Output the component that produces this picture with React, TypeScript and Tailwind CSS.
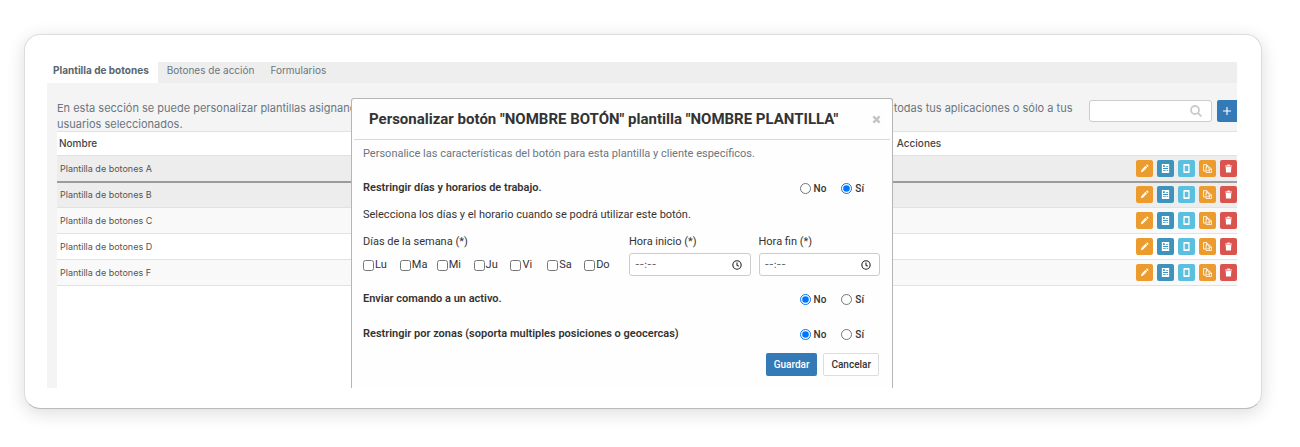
import type { ReactNode } from 'react';

const TABS = ['Plantilla de botones', 'Botones de acción', 'Formularios'];

const ROWS = [
  { name: 'Plantilla de botones A', className: 'bg-[#ededed] border-b-2 border-[#9b9c9c]' },
  { name: 'Plantilla de botones B', className: 'bg-[#ededed] border-b border-[#e2e2e2]' },
  { name: 'Plantilla de botones C', className: 'bg-[#f9f9f9] border-b border-[#e2e2e2]' },
  { name: 'Plantilla de botones D', className: 'bg-white border-b border-[#e2e2e2]' },
  { name: 'Plantilla de botones F', className: 'bg-[#f9f9f9] border-b border-[#e2e2e2]' },
];

const DAYS = ['Lu', 'Ma', 'Mi', 'Ju', 'Vi', 'Sa', 'Do'];

function Glyph({ children }: { children: ReactNode }) {
  return (
    <svg viewBox="0 0 16 16" className="size-[9px]" fill="currentColor" aria-hidden="true">
      {children}
    </svg>
  );
}

const ACTIONS = [
  {
    label: 'Editar',
    className: 'bg-[#ec9c2e]',
    icon: (
      <Glyph>
        <path d="M1.5 14.5l1-4 7.2-7.2 3 3-7.2 7.2zM10.7 2.3l1-1c.5-.5 1.2-.5 1.7 0l1.3 1.3c.5.5.5 1.2 0 1.7l-1 1z" />
      </Glyph>
    ),
  },
  {
    label: 'Formulario',
    className: 'bg-[#3d93bb]',
    icon: (
      <Glyph>
        <path
          fillRule="evenodd"
          d="M1.5 0h13v16h-13zM3.5 2.2v3.2h3.2V2.2zM8.6 3.6v1.5h4V3.6zM3.5 7.2v1.5h9V7.2zM3.5 11v1.5h5V11zM10 11v1.5h2.6V11z"
        />
      </Glyph>
    ),
  },
  {
    label: 'Móvil',
    className: 'bg-[#5bc0de]',
    icon: (
      <Glyph>
        <path
          fillRule="evenodd"
          d="M4 0h8a1.5 1.5 0 0 1 1.5 1.5v13A1.5 1.5 0 0 1 12 16H4a1.5 1.5 0 0 1-1.5-1.5v-13A1.5 1.5 0 0 1 4 0zM4.8 3v10h6.4V3z"
        />
      </Glyph>
    ),
  },
  {
    label: 'Copiar',
    className: 'bg-[#ec9c2e]',
    icon: (
      <Glyph>
        <g fill="none" stroke="currentColor" strokeWidth="1.5">
          <path d="M5 12.5H1V1h5.5l2.5 2.5" />
          <path d="M6 1v3.5h2" />
          <path d="M5.5 5h5.5l4 4v6H5.5z" />
          <path d="M10.5 5v4.5H15M7.5 12h4.5M10.5 10.5l1.7 1.5-1.7 1.5" />
        </g>
      </Glyph>
    ),
  },
  {
    label: 'Eliminar',
    className: 'bg-[#d9534f]',
    icon: (
      <Glyph>
        <path d="M6 1h4v1.5h4v2H2v-2h4zM3 5.5h10l-.6 9.5H3.6z" />
      </Glyph>
    ),
  },
];

function RowActions() {
  return (
    <div className="flex justify-end gap-1">
      {ACTIONS.map((action) => (
        <button
          key={action.label}
          aria-label={action.label}
          className={`flex size-[17px] items-center justify-center rounded-[2px] text-white ${action.className}`}
        >
          {action.icon}
        </button>
      ))}
    </div>
  );
}

function YesNo({ name, value }: { name: string; value: 'No' | 'Sí' }) {
  return (
    <div className="flex gap-[15px]">
      {['No', 'Sí'].map((option) => (
        <label key={option} className="flex items-center gap-[3px] text-[10px] font-medium">
          <input type="radio" name={name} defaultChecked={option === value} className="size-[11px]" />
          {option}
        </label>
      ))}
    </div>
  );
}

function QuestionRow({ label, name, value }: { label: string; name: string; value: 'No' | 'Sí' }) {
  return (
    <fieldset className="flex h-4 items-center justify-between pr-4">
      <span className="text-[11px] leading-4 font-semibold">{label}</span>
      <YesNo name={name} value={value} />
    </fieldset>
  );
}

function TimeField({ id, label }: { id: string; label: string }) {
  return (
    <div className="flex min-w-0 flex-1 flex-col">
      <label htmlFor={id} className="text-[11px] leading-4">
        {label}
      </label>
      <div className="mt-[3px] flex h-[23px] items-center rounded-[3px] border border-[#ccc] bg-white px-[5px]">
        <input
          id={id}
          placeholder="--:--"
          className="min-w-0 flex-1 font-['Inter',sans-serif] text-[10px] outline-none placeholder:text-[#555]"
        />
        <svg viewBox="0 0 12 12" className="mr-[3px] size-[10px]" fill="none" stroke="#222" strokeWidth="1.3" aria-hidden="true">
          <circle cx="6" cy="6" r="5" />
          <path d="M6 3v3.2l2 1.2" />
        </svg>
      </div>
    </div>
  );
}

function ButtonDialog() {
  return (
    <div
      role="dialog"
      aria-labelledby="dialog-title"
      className="absolute top-9 bottom-0 left-[304px] w-[542px] rounded-t-[3px] border border-b-0 border-[#b5b5b5] bg-[#fefefe] font-['Roboto',sans-serif] text-[#333]"
    >
      <div className="mx-[2px] flex h-[41px] items-center justify-between border-b border-[#d8d8d8] pr-[9px] pl-[15px]">
        <h2 id="dialog-title" className="text-[15px] font-bold whitespace-nowrap">
          Personalizar botón "NOMBRE BOTÓN" plantilla "NOMBRE PLANTILLA"
        </h2>
        <button aria-label="Cerrar" className="text-[#c4c4c4]">
          <svg viewBox="0 0 10 10" className="size-[9px]" stroke="currentColor" strokeWidth="2.6" aria-hidden="true">
            <path d="M1.5 1.5l7 7M8.5 1.5l-7 7" />
          </svg>
        </button>
      </div>
      <div className="pr-3 pl-[11px]">
        <p className="mt-[6px] text-[11px] leading-4 text-[#6b7680]">
          Personalice las características del botón para esta plantilla y cliente específicos.
        </p>
        <div className="mt-[18px]">
          <QuestionRow label="Restringir días y horarios de trabajo." name="horarios" value="Sí" />
        </div>
        <p className="mt-[11px] text-[11px] leading-4">
          Selecciona los días y el horario cuando se podrá utilizar este botón.
        </p>
        <div className="mt-[11px] flex gap-2">
          <fieldset className="w-[258px] shrink-0">
            <legend className="text-[11px] leading-4">Días de la semana (*)</legend>
            <div className="mt-[7px] grid grid-cols-7">
              {DAYS.map((day) => (
                <label key={day} className="flex items-center gap-px text-[11px] leading-4">
                  <input type="checkbox" className="size-[11px]" />
                  {day}
                </label>
              ))}
            </div>
          </fieldset>
          <TimeField id="hora-inicio" label="Hora inicio (*)" />
          <TimeField id="hora-fin" label="Hora fin (*)" />
        </div>
        <div className="mt-[15px] flex flex-col gap-[19px]">
          <QuestionRow label="Enviar comando a un activo." name="comando" value="No" />
          <QuestionRow label="Restringir por zonas (soporta multiples posiciones o geocercas)" name="zonas" value="No" />
        </div>
        <div className="mt-[11px] flex justify-end gap-[6px] pr-px text-[10px] font-medium">
          <button className="h-[23px] rounded-[2px] bg-[#337ab7] px-2 text-white">Guardar</button>
          <button className="h-[23px] rounded-[2px] border border-[#ddd] bg-white px-[7px]">Cancelar</button>
        </div>
      </div>
    </div>
  );
}

export default function App() {
  return (
    <main className="bg-white px-6 pt-[34px] pb-[38px] font-['Inter',sans-serif]">
      <div className="mr-[14px] rounded-[16px] border border-[#dcdcdc] border-b-[#bbb] bg-white pt-[27px] pr-6 pb-5 pl-[22px] shadow-[0_4px_18px_rgba(0,0,0,0.14)]">
        <div className="relative flex min-h-[326px] flex-col bg-[#f4f4f4]">
          <nav className="flex h-[21px] bg-[#eee] text-[10px] text-[#6b7680]">
            {TABS.map((tab, i) => (
              <button
                key={tab}
                className={i === 0 ? 'bg-white pr-[9px] pb-1 pl-[6px] font-bold text-[#5a646d]' : 'pr-[7px] pb-1 pl-[9px]'}
              >
                {tab}
              </button>
            ))}
          </nav>

          <div className="flex h-12 items-start justify-between pl-[10px]">
            <p className="mt-[17px] flex-1 text-[11px] leading-4 text-[#6b7680]">
              En esta sección se puede personalizar plantillas asignando los botones de acción y los formularios que necesites a
              cada botón, y personalizar si se muestran en todas tus aplicaciones o sólo a tus usuarios seleccionados.
            </p>
            <div className="mt-[17px] flex gap-[5px]">
              <div className="flex h-[22px] w-[123px] items-center rounded-[3px] border border-[#ccc] bg-white pr-[9px] pl-2">
                <input type="search" aria-label="Buscar" className="min-w-0 flex-1 text-[11px] outline-none" />
                <svg viewBox="0 0 12 12" className="size-3" fill="none" stroke="#ccc" strokeWidth="1.8" aria-hidden="true">
                  <circle cx="5" cy="5" r="4" />
                  <path d="M8 8l3.500 3.500" />
                </svg>
              </div>
              <button
                aria-label="Añadir"
                className="flex h-[22px] w-5 items-center justify-center rounded-l-[2px] bg-[#337ab7] text-white"
              >
                <svg viewBox="0 0 10 10" className="size-2" stroke="currentColor" strokeWidth="1.4" aria-hidden="true">
                  <path d="M5 0v10M0 5h10" />
                </svg>
              </button>
            </div>
          </div>

          <div className="ml-[10px] flex-1 bg-white">
            <table className="w-full border-collapse text-left text-[#555]">
              <thead>
                <tr className="h-6 border-y border-[#e2e2e2] text-[10px] text-[#444]">
                  <th className="w-[71%] pl-[2px] font-medium">Nombre</th>
                  <th className="pl-[2px] font-medium">Acciones</th>
                </tr>
              </thead>
              <tbody>
                {ROWS.map((row) => (
                  <tr key={row.name} className={`h-[26px] text-[9px] ${row.className}`}>
                    <td className="pl-[3px]">{row.name}</td>
                    <td>
                      <RowActions />
                    </td>
                  </tr>
                ))}
              </tbody>
            </table>
          </div>

          <ButtonDialog />
        </div>
      </div>
    </main>
  );
}
